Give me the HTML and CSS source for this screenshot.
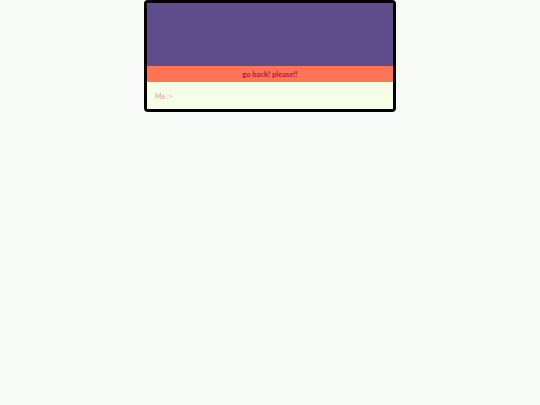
FILE: index.html
```html
<!DOCTYPE html>
<html>
<head>
<meta charset="utf-8">
<link rel="stylesheet" href="styles.css">
</head>
<body>
<div class="card">
  <div class="hero"></div>
  <div class="banner">go back! please!!</div>
  <div class="footer">Me :&gt;</div>
</div>
</body>
</html>
```
FILE: styles.css
```css
html, body {
  margin: 0;
  padding: 0;
  background: #f8faf7;
  font-family: Lato, "Liberation Sans", sans-serif;
}
.card {
  width: 246px;
  margin: 0 auto;
  border: 3px solid #000;
  border-radius: 4px;
  overflow: hidden;
}
.hero {
  height: 63px;
  background: #5e4d8a;
}
.banner {
  height: 16px;
  background: #ff7357;
  color: #b01e4c;
  font-weight: 900;
  font-size: 7.5px;
  display: flex;
  align-items: center;
  justify-content: center;
}
.footer {
  height: 27px;
  background: #f5ffe6;
  color: #f29a86;
  font-size: 7px;
  display: flex;
  align-items: center;
  padding-left: 8px;
}
```
